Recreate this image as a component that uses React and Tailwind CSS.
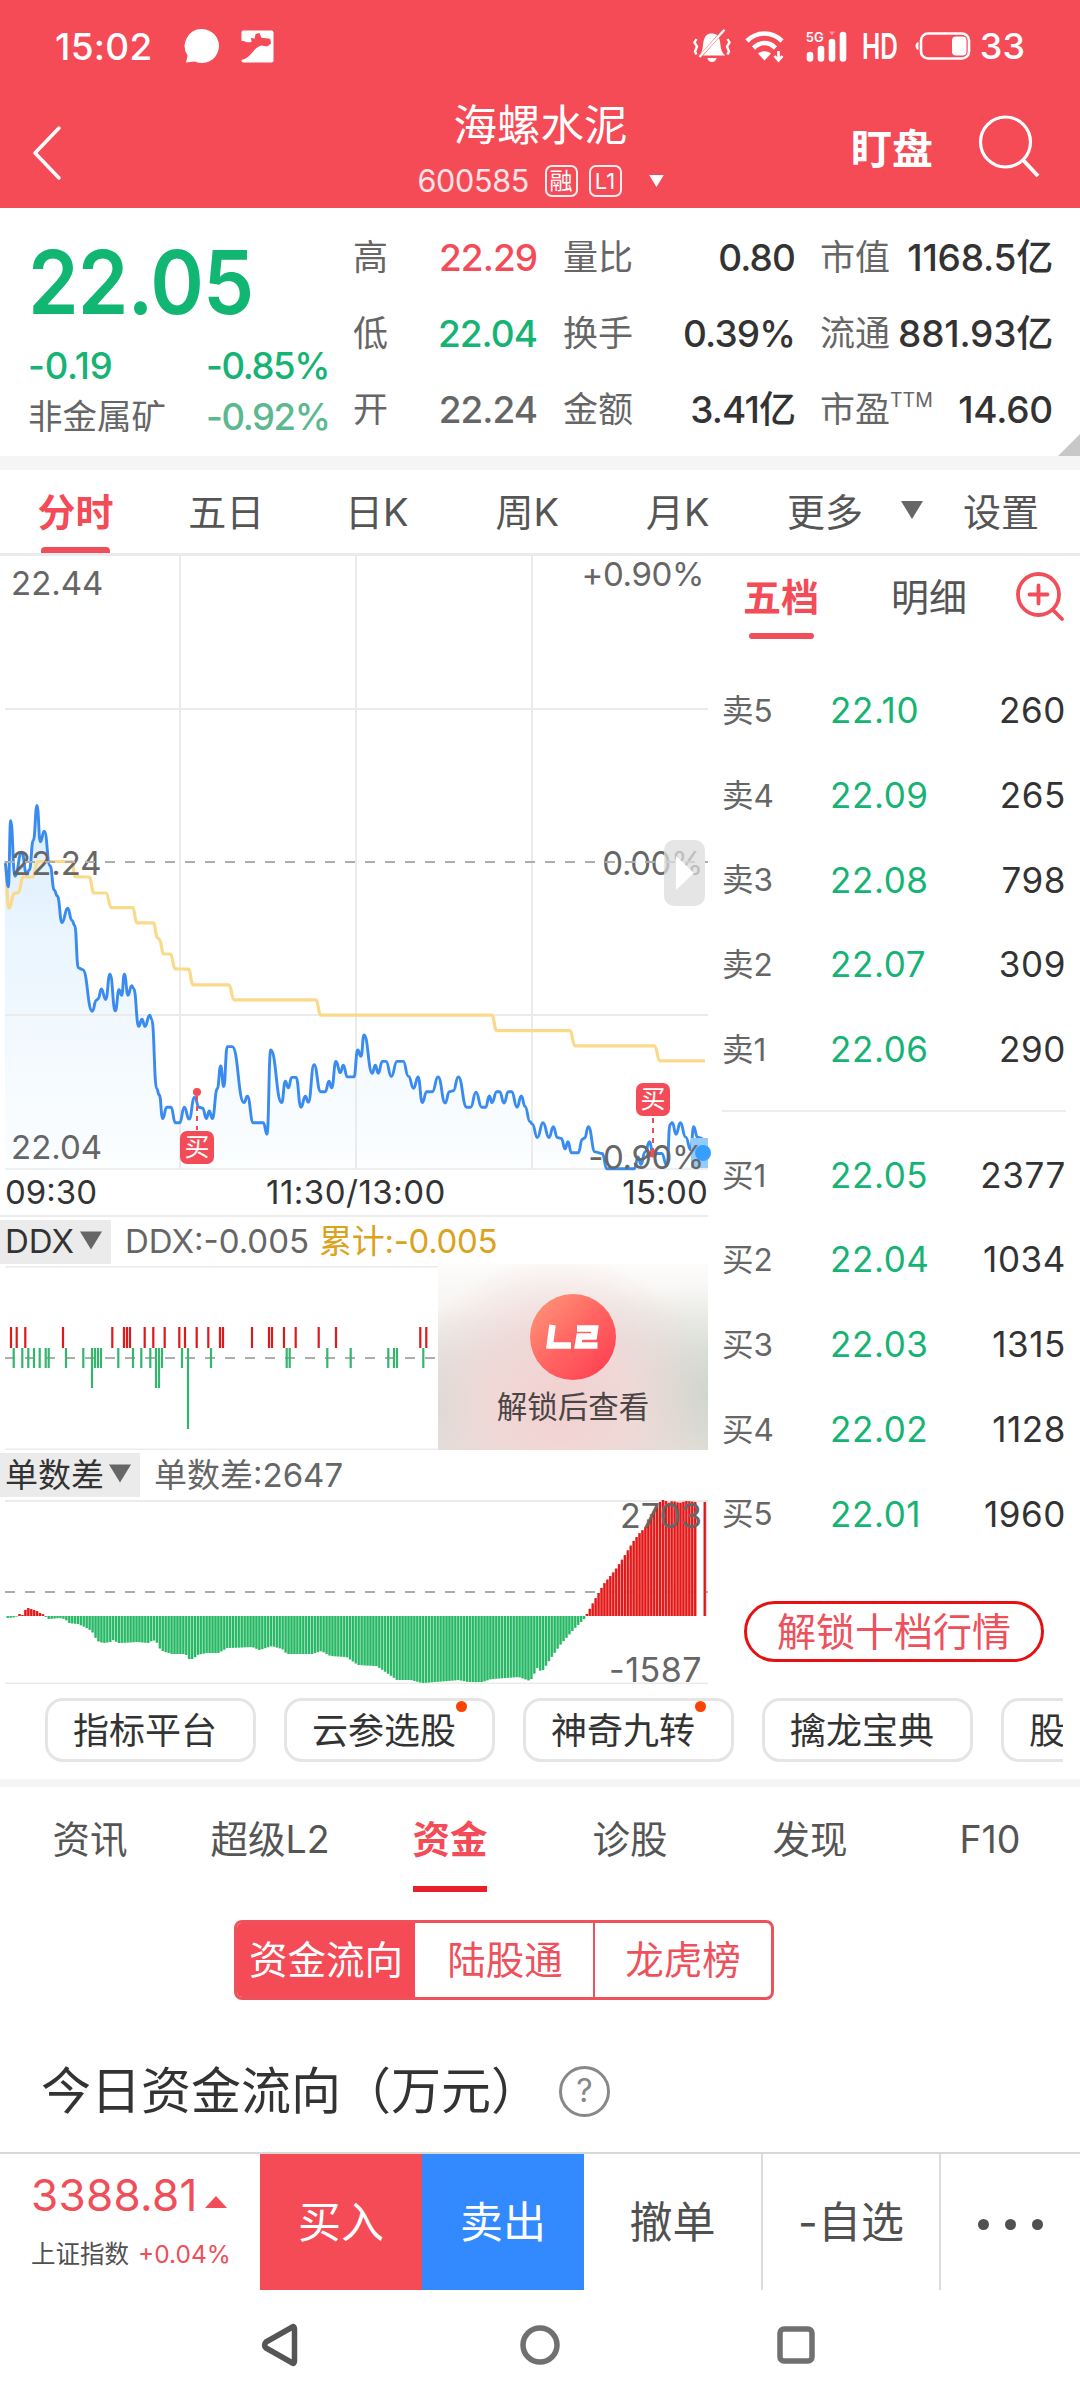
import React from "react";
import clsx from "clsx";

const stats = [
  { label: "高", value: "22.29", color: "text-[#f34b57]" },
  { label: "低", value: "22.04", color: "text-[#15b374]" },
  { label: "开", value: "22.24", color: "text-[#666666]" },
];

const volumes = [
  { label: "量比", value: "0.80" },
  { label: "换手", value: "0.39%" },
  { label: "金额", value: "3.41亿" },
];

const caps = [
  { label: "市值", value: "1168.5亿" },
  { label: "流通", value: "881.93亿" },
  { label: "市盈", sup: "TTM", value: "14.60" },
];

const asks = [
  ["卖5", "22.10", "260"],
  ["卖4", "22.09", "265"],
  ["卖3", "22.08", "798"],
  ["卖2", "22.07", "309"],
  ["卖1", "22.06", "290"],
];

const bids = [
  ["买1", "22.05", "2377"],
  ["买2", "22.04", "1034"],
  ["买3", "22.03", "1315"],
  ["买4", "22.02", "1128"],
  ["买5", "22.01", "1960"],
];

const tools = [
  { name: "指标平台" },
  { name: "云参选股", dot: true },
  { name: "神奇九转", dot: true },
  { name: "擒龙宝典" },
  { name: "股东研究" },
];

const infoTabs = ["资讯", "超级L2", "资金", "诊股", "发现", "F10"];

// plot units: x is a third of a pixel, y is scaled by PLOT_Y
const PLOT_Y = 0.42088;

const pricePoints = [
  [14, 742], [25, 800], [32, 643], [45, 775], [65, 718], [80, 770], [88, 760], [100, 690], [111, 607],
  [121, 693], [133, 668], [150, 750], [163, 808], [172, 822], [186, 885], [203, 851], [216, 880],
  [224, 892], [235, 993], [248, 997], [277, 1096], [289, 1070], [295, 1066], [304, 1043], [317, 1068],
  [330, 1008], [346, 1095], [357, 1045], [365, 1058], [373, 1008], [384, 1058], [395, 1035], [401, 1042],
  [416, 1132], [426, 1115], [435, 1132], [449, 1105], [455, 1115], [470, 1280], [478, 1295], [488, 1351],
  [500, 1324], [513, 1324], [526, 1361], [539, 1361], [553, 1324], [567, 1352], [584, 1300], [597, 1324],
  [608, 1326], [619, 1351], [628, 1333], [637, 1351], [652, 1280], [662, 1226], [671, 1275], [682, 1180],
  [697, 1180], [732, 1313], [742, 1298], [760, 1361], [790, 1361], [801, 1388], [812, 1188], [845, 1313],
  [856, 1262], [865, 1278], [875, 1253], [888, 1253], [903, 1324], [916, 1298], [925, 1312], [942, 1223],
  [962, 1287], [976, 1287], [987, 1262], [995, 1278], [1008, 1215], [1021, 1242], [1030, 1224],
  [1042, 1252], [1062, 1252], [1073, 1188], [1083, 1203], [1092, 1152], [1117, 1243], [1126, 1224],
  [1135, 1243], [1147, 1215], [1158, 1215], [1174, 1251], [1191, 1215], [1210, 1215], [1225, 1250],
  [1241, 1279], [1254, 1252], [1267, 1313], [1280, 1287], [1297, 1287], [1314, 1252], [1336, 1314],
  [1348, 1287], [1360, 1285], [1375, 1252], [1400, 1324], [1412, 1324], [1428, 1288], [1445, 1324],
  [1457, 1324], [1468, 1297], [1476, 1313], [1490, 1287], [1499, 1287], [1512, 1314], [1525, 1287],
  [1535, 1287], [1551, 1324], [1564, 1297], [1575, 1322], [1590, 1358], [1597, 1364], [1612, 1396],
  [1629, 1361], [1647, 1396], [1660, 1370], [1672, 1396], [1684, 1398], [1695, 1423], [1704, 1406],
  [1714, 1432], [1735, 1432], [1747, 1400], [1754, 1397], [1765, 1370], [1785, 1430], [1807, 1434],
  [1820, 1470], [1903, 1470], [1914, 1442], [1923, 1460], [1935, 1430], [1949, 1406], [1958, 1434],
  [1985, 1434], [2001, 1463], [2010, 1365], [2017, 1361], [2028, 1388], [2041, 1361], [2057, 1395],
  [2072, 1425], [2081, 1370], [2092, 1395], [2105, 1398], [2118, 1434],
];

const averagePoints = [
  [14, 742], [27, 851], [43, 816], [54, 814], [70, 777], [97, 777], [115, 740], [215, 740], [226, 776],
  [267, 777], [282, 815], [318, 815], [334, 850], [398, 850], [411, 886], [460, 886], [473, 922],
  [478, 925], [491, 960], [511, 960], [526, 995], [565, 996], [580, 1033], [687, 1033], [702, 1069],
  [948, 1069], [962, 1105], [1475, 1105], [1490, 1142], [1710, 1142], [1725, 1178], [1963, 1178],
  [1980, 1214], [2115, 1214],
];

const toPixel = ([x, y]) => [x / 3, y * PLOT_Y - 6];

const smoothPath = (points) => {
  const px = points.map(toPixel);
  return px
    .map(([x, y], i) => {
      if (i === 0) return `M${x.toFixed(1)} ${y.toFixed(1)}`;
      const [x0, y0] = px[i - 1];
      const mid = ((x0 + x) / 2).toFixed(1);
      return `C${mid} ${y0.toFixed(1)} ${mid} ${y.toFixed(1)} ${x.toFixed(1)} ${y.toFixed(1)}`;
    })
    .join("");
};

const pricePath = smoothPath(pricePoints);
const averagePath = smoothPath(averagePoints);

const ddxRed = [
  33, 50, 76, 189, 337, 372, 381, 390, 434, 460, 494, 538, 555, 590, 625, 660, 669, 756, 807, 816, 852,
  887, 956, 1008, 1261, 1279,
];
const ddxGreen = [
  41, 67, 85, 102, 119, 137, 146, 198, 250, 285, 294, 303, 355, 399, 424, 451, 486, 546, 633, 860, 869,
  982, 1052, 1165, 1182, 1191, 1270,
];
const ddxDeep = [[276, 40], [468, 40], [477, 40], [564, 81]];

const orderEnvelope = [
  [17, -2], [35, -1], [42, 2], [49, 1], [55, 6], [61, 8], [67, 7], [74, 6], [80, 5], [87, 3], [93, 2],
  [100, -1], [106, -3], [130, -2], [142, -3], [150, -7], [170, -8], [185, -11], [200, -15], [212, -25],
  [225, -27], [240, -26], [246, -24], [258, -27], [300, -26], [325, -27], [332, -24], [340, -25],
  [350, -34], [360, -36], [375, -38], [405, -38], [408, -43], [422, -43], [428, -39], [450, -37],
  [475, -37], [495, -32], [550, -31], [565, -34], [592, -30], [615, -33], [625, -38], [680, -38],
  [700, -35], [720, -40], [755, -41], [780, -49], [820, -50], [840, -56], [865, -64], [895, -64],
  [920, -67], [1000, -64], [1020, -66], [1050, -66], [1070, -63], [1130, -61], [1155, -65], [1170, -52],
  [1180, -56], [1200, -42], [1220, -29], [1235, -21], [1250, -13], [1272, -3], [1282, 5], [1300, 20],
  [1315, 32], [1340, 46], [1360, 60], [1380, 75], [1395, 84], [1405, 88], [1415, 100], [1430, 108],
  [1440, 116], [1448, 116], [1455, 113], [1465, 115], [1480, 113], [1495, 115], [1515, 114],
];

const orderBars = [];
for (let x = 17; x <= 1520; x += 6.37) {
  const next = orderEnvelope.findIndex(([ex]) => ex > x);
  const i = next < 0 ? orderEnvelope.length - 1 : next;
  const [x0, h0] = orderEnvelope[i - 1];
  const [x1, h1] = orderEnvelope[i];
  orderBars.push({ x: x / 2.178, h: h0 + ((h1 - h0) * Math.min(x - x0, x1 - x0)) / (x1 - x0) });
}
orderBars.push({ x: 704.8, h: 114 });

const DownTriangle = ({ className }) => (
  <svg viewBox="0 0 22 18" className={className}>
    <path d="M0 0h22L11 18z" fill="currentColor" />
  </svg>
);

const StatusBar = () => (
  <div className="flex h-[92px] items-center pl-[55px] pr-[55px] text-white">
    <span className="text-[37px] font-medium leading-none tracking-[0.3px]">15:02</span>
    <svg viewBox="0 0 36 36" className="ml-[31px] h-[36px] w-[36px]">
      <path d="M18 1a17 17 0 1 1-7 32.5L2 34.500l1.600-7A17 17 0 0 1 18 1z" fill="white" />
    </svg>
    <svg viewBox="0 0 34 34" className="ml-[21px] h-[33px] w-[33px]">
      <rect x="0.500" y="0.500" width="33" height="33" rx="2" fill="white" />
      <path d="M0 11c4 0 7 3 11 1l-1-4 4 1 1-5 4-1 2 5 9 1 1 5-4 3-6-1c-10 3-9 12-21 15z" fill="#f54b57" />
    </svg>

    <div className="ml-auto flex items-center">
      <svg viewBox="0 0 38 34" className="h-[34px] w-[38px]" fill="none" stroke="white" strokeWidth="2.400">
        <path d="M6 26.500c4-3.500 3.500-8 4.500-14C12 6 15 4.500 19 4.500s7 2 8 8c1 7 1 11 5.500 14z" fill="white" stroke="none" />
        <path d="M14.500 29h9a4.500 4 0 0 1-9 0z" fill="white" stroke="none" />
        <path d="M5 30L31 1" stroke="#f54b57" strokeWidth="3" />
        <path d="M6.500 28L31.500 0.800" />
        <path d="M3.500 10l-2 3.500 2.500 4-2 5 1.500 3M34.500 10l2 3.500-2.500 4 2 5-1.500 3" />
      </svg>
      <svg viewBox="0 0 40 34" className="ml-[14px] h-[34px] w-[40px]" fill="none" stroke="white" strokeWidth="4.600">
        <path d="M2 12c10-10 25-10 35 0" />
        <path d="M8.500 19c7-6.500 15-6.500 22 0" />
        <path d="M13 24.500c4-3 9-3 13 0l-6.500 7z" fill="white" stroke="none" />
        <path d="M33.500 22v9m-4-4l4 4.500 4-4.500" strokeWidth="2.600" />
      </svg>
      <div className="relative ml-[21px] h-[34px] w-[42px]">
        <span className="absolute left-0 top-[2px] text-[13px] font-semibold leading-none">5G</span>
        <svg viewBox="0 0 42 34" className="h-[34px] w-[42px]" stroke="white" strokeWidth="6.600" strokeLinecap="round">
          <path d="M4 26v3.500M15 20v9.500M26 13v16.500M37 6v23.500" />
          <path d="M23 2.500h6l-3 4z" fill="#ff9aa2" stroke="none" />
        </svg>
      </div>
      <span className="ml-[14px] w-[36px] origin-left scale-x-[0.68] text-[36px] font-semibold leading-none">HD</span>
      <svg viewBox="0 0 56 30" className="ml-[17px] h-[30px] w-[56px]">
        <rect x="6" y="2.500" width="48" height="25" rx="7" fill="none" stroke="white" strokeWidth="2.600" />
        <rect x="37" y="5.500" width="14.500" height="19" rx="4" fill="white" />
        <path d="M3.500 11v8c-4-1-4-7 0-8z" fill="white" />
      </svg>
      <span className="ml-[9px] text-[36px] font-medium leading-none">33</span>
    </div>
  </div>
);

const Header = () => (
  <header className="h-[208px] bg-[#f54b57] text-white">
    <StatusBar />
    <div className="flex h-[116px] items-start justify-between pl-[30px] pr-[40px]">
      <svg viewBox="0 0 34 56" className="mt-[33px] h-[56px] w-[34px]" fill="none" stroke="white" strokeWidth="3.500">
        <path d="M29 3L5 28l24 25" strokeLinecap="round" strokeLinejoin="round" />
      </svg>
      <div className="ml-[166px] flex w-[330px] flex-col items-center">
        <h1 className="mt-[10px] h-[46px] text-[43.500px] leading-[46px]">海螺水泥</h1>
        <div className="mt-[16px] flex h-[34px] w-[330px] items-center pl-[42px]">
          <span className="w-[111px] text-[30.500px] leading-none tracking-[-0.3px] text-white/85">600585</span>
          <span className="ml-[16px] flex h-[32px] w-[33px] shrink-0 items-center justify-center rounded-[7px] border-2 border-white/90 text-[23px] leading-none">
            融
          </span>
          <span className="ml-[11px] flex h-[32px] w-[33px] shrink-0 items-center justify-center rounded-[7px] border-2 border-white/90 text-[22px] leading-none">
            L1
          </span>
          <DownTriangle className="ml-[25px] h-[12px] w-[19px] shrink-0" />
        </div>
      </div>
      <div className="flex items-center">
        <span className="mt-[27px] text-[41px] font-bold leading-[46px]">盯盘</span>
        <svg viewBox="0 0 64 64" className="ml-[43px] mt-[22px] h-[64px] w-[64px]" fill="none" stroke="white" strokeWidth="3.200">
          <circle cx="29.500" cy="28" r="25" />
          <path d="M47 46l15 16" strokeWidth="4" />
        </svg>
      </div>
    </div>
  </header>
);

const QuotePanel = () => (
  <section className="relative flex h-[248px] bg-white pl-[28px]">
    <div className="w-[325px]">
      <div className="mt-[30px] h-[88px] origin-left scale-x-[0.925] text-[88px] font-semibold leading-[88px] tracking-[-1px] text-[#12b673]">22.05</div>
      <div className="mt-[21px] flex h-[38px] items-center text-[36.500px] font-medium leading-none text-[#15b374]">
        <span className="w-[178px] tracking-[-0.2px]">-0.19</span>
        <span className="tracking-[-1.4px]">-0.85%</span>
      </div>
      <div className="mt-[13px] flex h-[38px] items-center text-[36.500px] leading-none">
        <span className="w-[178px] text-[34.500px] text-[#666666]">非金属矿</span>
        <span className="font-medium tracking-[-1.4px] text-[#5cb88f]">-0.92%</span>
      </div>
    </div>
    <div className="flex w-[184px] flex-col pt-[11px]">
      {stats.map((s) => (
        <div key={s.label} className="flex h-[76px] items-center justify-between leading-none">
          <span className="text-[35px] text-[#666666]">{s.label}</span>
          <span className={clsx("text-[37px] font-medium tracking-[-1px]", s.color)}>{s.value}</span>
        </div>
      ))}
    </div>
    <div className="ml-[26px] flex w-[232px] flex-col pt-[11px]">
      {volumes.map((s) => (
        <div key={s.label} className="flex h-[76px] items-center justify-between leading-none">
          <span className="text-[35px] text-[#666666]">{s.label}</span>
          <span className="text-[37px] font-medium tracking-[-0.9px] text-[#333333]">{s.value}</span>
        </div>
      ))}
    </div>
    <div className="ml-[25px] flex w-[233px] flex-col pt-[11px]">
      {caps.map((s) => (
        <div key={s.label} className="flex h-[76px] items-center justify-between whitespace-nowrap leading-none">
          <span className="flex text-[35px] text-[#666666]">
            {s.label}
            {s.sup && <span className="mt-[-1px] text-[19.500px] leading-none">{s.sup}</span>}
          </span>
          <span className="text-[37px] font-medium tracking-[-0.2px] text-[#333333]">{s.value}</span>
        </div>
      ))}
    </div>
    <svg viewBox="0 0 22 22" className="absolute bottom-0 right-0 h-[22px] w-[22px]">
      <path d="M22 0v22H0z" fill="#c8c8c8" />
    </svg>
  </section>
);

const PeriodTabs = () => (
  <nav className="flex h-[86px] items-center border-b-[3px] border-[#ebebeb] bg-white text-[38px] leading-none text-[#555555]">
    <div className="relative flex h-full w-[151px] items-center justify-center font-bold text-[#f34b57]">
      分时
      <span className="absolute bottom-0 left-[41px] h-[6px] w-[69px] rounded-t-[4px] bg-[#f04e59]" />
    </div>
    {["五日", "日K", "周K", "月K"].map((t) => (
      <div key={t} className="w-[150.500px] text-center">{t}</div>
    ))}
    <div className="ml-[34px]">更多</div>
    <DownTriangle className="ml-[38px] mt-[-3px] h-[18px] w-[22px] text-[#666666]" />
    <div className="ml-[40px]">设置</div>
  </nav>
);

const BuyMark = ({ className }) => (
  <span className={clsx("absolute flex h-[33px] w-[34px] items-center justify-center rounded-[7px] bg-[#f34b57] text-[25px] leading-none text-white", className)}>
    买
  </span>
);

const PriceChart = () => (
  <div className="relative h-[613px] w-[708px] text-[33px] leading-[34px] text-[#666666]">
    <svg viewBox="0 0 708 618" className="h-[618px] w-[708px] overflow-visible">
      <defs>
        <linearGradient id="priceFill" x1="0" y1="0" x2="0" y2="1">
          <stop offset="0" stopColor="#d9edfd" />
          <stop offset="0.35" stopColor="#eaf5fe" />
          <stop offset="1" stopColor="#fcfeff" />
        </linearGradient>
      </defs>
      <path d={`${pricePath}L706 613L5 613z`} fill="url(#priceFill)" />
      <path d="M5 153H708M5 459H708M180 0V613M356 0V613M532 0V613" stroke="#ebebeb" strokeWidth="2" />
      <path d="M5 613H708" stroke="#e8eaec" strokeWidth="1.500" />
      <path d={averagePath} fill="none" stroke="#fbd98b" strokeWidth="3.200" />
      <path d={pricePath} fill="none" stroke="#3a8bf0" strokeWidth="2.900" />
      <rect x="691" y="582" width="17" height="30" fill="#94cbfb" />
      <circle cx="703" cy="597" r="8" fill="#35a0ff" />
      <path d="M197 540V574M653 562V597" stroke="#f34b57" strokeWidth="2" strokeDasharray="5 5" />
      <circle cx="197" cy="536" r="4" fill="#f34b57" />
      <circle cx="653" cy="597.500" r="4" fill="#f34b57" />
    </svg>
    <span className="absolute left-[11px] top-[10px]">22.44</span>
    <span className="absolute left-[11px] top-[290px]">22.24</span>
    <span className="absolute left-[11px] top-[574px]">22.04</span>
    <span className="absolute right-[4px] top-[1px] tracking-[-0.4px]">+0.90%</span>
    <span className="absolute right-[5px] top-[290px] tracking-[-0.4px]">0.00%</span>
    <span className="absolute right-[4px] top-[584px] tracking-[-0.4px]">-0.90%</span>
    <svg viewBox="0 0 708 4" className="absolute left-0 top-[304px] h-[4px] w-[708px]">
      <path d="M5 2H708" stroke="#adadad" strokeWidth="2.200" strokeDasharray="10 10" />
    </svg>
    <div className="absolute left-[664px] top-[284px] flex h-[66px] w-[41px] items-center justify-center rounded-[10px] bg-[#dcdcdc]/75">
      <svg viewBox="0 0 18 34" className="h-[34px] w-[18px]">
        <path d="M0 0l18 17L0 34z" fill="white" />
      </svg>
    </div>
    <BuyMark className="left-[180px] top-[575px]" />
    <BuyMark className="left-[636px] top-[527px]" />
  </div>
);

const DdxChart = () => (
  <div className="relative h-[184px] w-[708px]">
    <svg viewBox="0 1266 708 184" className="h-[184px] w-[708px]">
      <path d="M5 1266.500H708M5 1449.500H708" stroke="#ebebeb" strokeWidth="2" />
      <path d="M5 1358H435" stroke="#adadad" strokeWidth="2.200" strokeDasharray="10 10" />
      <path d={ddxRed.map((x) => `M${(x / 3).toFixed(1)} 1327V1348`).join("")} stroke="#dd1b1b" strokeWidth="2.200" />
      <path d={ddxGreen.map((x) => `M${(x / 3).toFixed(1)} 1348V1368`).join("")} stroke="#35b56e" strokeWidth="2.200" />
      <path d={ddxDeep.map(([x, h]) => `M${(x / 3).toFixed(1)} 1348v${h}`).join("")} stroke="#35b56e" strokeWidth="2.200" />
    </svg>
    <div className="absolute bottom-0 right-0 flex h-[186px] w-[270px] flex-col items-center bg-[radial-gradient(ellipse_at_45%_75%,#f2d0d0_0%,#efd9d7_35%,transparent_75%),radial-gradient(ellipse_at_100%_70%,#cbd6cc_0%,transparent_60%),radial-gradient(ellipse_at_0%_78%,#d3dad4_0%,transparent_50%),linear-gradient(180deg,#fdfcfb_0%,#f3efec_40%,#e3dfda_70%,#eee3e0_100%)]">
      <div className="mt-[30px] flex h-[86px] w-[86px] items-center justify-center rounded-full bg-linear-to-br from-[#ff9a7c] via-[#ff6461] to-[#ff3350]">
        <svg viewBox="0 0 54 26" className="h-[26px] w-[54px]" fill="none" stroke="white" strokeWidth="6.500">
          <path d="M6.500 1L3.800 21.500H25" />
          <path d="M31 4.500H49L47.800 12.500H33.500L32 21.500H51.500" />
        </svg>
      </div>
      <span className="mt-[9px] text-[30.500px] leading-[36px] text-[#4a4545]">解锁后查看</span>
    </div>
  </div>
);

const OrderCountChart = () => (
  <div className="relative h-[184px] w-[708px] text-[34px] leading-[40px] text-[#666666]">
    <svg viewBox="0 1500 708 184" className="h-[184px] w-[708px]">
      <path d="M5 1501H708M5 1683.500H708" stroke="#ebebeb" strokeWidth="2" />
      <path d="M5 1592H708" stroke="#adadad" strokeWidth="2.200" strokeDasharray="10 10" />
      {orderBars.map((b, i) => (
        <g key={i} fill={b.h > 0 ? "#e01818" : "#2cb566"}>
          <rect
            x={b.x - 1.4}
            y={b.h > 0 ? 1616 - b.h : 1616}
            width="2.93"
            height={Math.abs(b.h)}
            fill={b.h > 0 ? "#f87878" : "#84e3ac"}
          />
          <rect x={b.x - 1} y={b.h > 0 ? 1616 - b.h : 1616} width="2" height={Math.abs(b.h)} />
        </g>
      ))}
    </svg>
    <span className="absolute right-[6px] top-[-4px]">2703</span>
    <span className="absolute right-[6px] top-[150px] tracking-[0.5px]">-1587</span>
  </div>
);

const BookRow = ({ row }) => (
  <div className="flex h-[84.7px] items-center leading-none">
    <span className="w-[108px] text-[31.500px] text-[#666666]">{row[0]}</span>
    <span className="text-[35px] tracking-[0.6px] text-[#15b374]">{row[1]}</span>
    <span className="ml-auto text-[35px] tracking-[0.6px] text-[#333333]">{row[2]}</span>
  </div>
);

const OrderBook = () => (
  <aside className="flex w-[372px] flex-col pl-[14px] pr-[14px]">
    <div className="flex h-[83px] items-start pl-[21px] text-[38px] leading-[44px]">
      <div className="relative mt-[19px] font-bold text-[#f34b57]">
        五档
        <span className="absolute left-[6px] top-[58px] h-[6px] w-[65px] rounded-full bg-[#f04e59]" />
      </div>
      <div className="ml-[72px] mt-[19px] text-[#555555]">明细</div>
      <svg viewBox="0 0 50 50" className="ml-[48px] mt-[15px] h-[50px] w-[50px] shrink-0" fill="none" stroke="#f04e59" strokeWidth="3.800">
        <circle cx="23.500" cy="23.500" r="20.500" />
        <path d="M14.500 23.500h18M23.500 14.500v18M37.500 38.500l9.500 9.500" strokeLinecap="round" />
      </svg>
    </div>
    <div className="mt-[29.500px]">
      {asks.map((row) => <BookRow key={row[0]} row={row} />)}
    </div>
    <div className="mt-[18px] h-[2px] bg-[#ededed]" />
    <div className="mt-[21px]">
      {bids.map((row) => <BookRow key={row[0]} row={row} />)}
    </div>
    <button className="ml-[22px] mt-[45px] flex h-[61px] w-[300px] items-center justify-center rounded-full border-[3px] border-[#e60f12] text-[39px] leading-none text-[#ee515c]">
      解锁十档行情
    </button>
  </aside>
);

const MarketBody = () => (
  <section className="flex h-[1128px] bg-white">
    <div className="w-[708px]">
      <PriceChart />
      <div className="relative flex h-[48px] items-center justify-between border-b-2 border-[#ececec] pl-[5px] text-[33px] leading-none text-[#333333]">
        <span>09:30</span>
        <span className="absolute left-[266px] tracking-[0.5px]">11:30/13:00</span>
        <span className="tracking-[0.2px]">15:00</span>
      </div>
      <div className="flex h-[49px] items-center text-[33px] leading-none">
        <div className="flex h-[44px] w-[111px] shrink-0 items-center bg-[#ebebeb] pl-[5px] text-[#333333]">
          DDX
          <DownTriangle className="ml-[6px] mt-[-3px] h-[19px] w-[22px] text-[#666666]" />
        </div>
        <span className="ml-[14px] text-[#666666]">DDX:-0.005</span>
        <span className="ml-[10px] tracking-[-0.3px] text-[#dba21e]">累计:-0.005</span>
      </div>
      <DdxChart />
      <div className="flex h-[50px] items-center text-[33px] leading-none">
        <div className="flex h-[44px] w-[140px] shrink-0 items-center bg-[#ebebeb] pl-[5px] text-[#333333]">
          单数差
          <DownTriangle className="ml-[5px] mt-[-3px] h-[19px] w-[22px] text-[#666666]" />
        </div>
        <span className="ml-[14px] text-[#666666]">单数差:2647</span>
      </div>
      <OrderCountChart />
    </div>
    <OrderBook />
  </section>
);

const ToolPills = () => (
  <div className="h-[95px] bg-white pl-[45px] pr-[17px] pt-[14px]">
    <div className="flex h-[64px] gap-[28px] overflow-hidden">
      {tools.map((t) => (
        <div key={t.name} className="relative flex h-[64px] w-[211px] shrink-0 items-center whitespace-nowrap rounded-[18px] border-[3px] border-[#e5e5e5] pl-[25px] pt-[1px] text-[36px] leading-none text-[#333333]">
          {t.name}
          {t.dot && <span className="absolute right-[25px] top-0 h-[11px] w-[11px] rounded-full bg-[#fb4304]" />}
        </div>
      ))}
    </div>
  </div>
);

const InfoTabs = () => (
  <nav className="grid h-[105px] grid-cols-6 bg-white text-[37.500px] leading-none text-[#555555]">
    {infoTabs.map((t) => {
      const active = t === "资金";
      return (
        <div key={t} className={clsx("relative flex items-center justify-center pt-[1px]", active && "font-bold text-[#f34b57]")}>
          {t}
          {active && <span className="absolute bottom-0 left-[53px] h-[6px] w-[74px] bg-[#e81f29]" />}
        </div>
      );
    })}
  </nav>
);

const FundFlow = () => (
  <section className="h-[260px] bg-white pt-[28px]">
    <div className="ml-[234px] flex h-[80px] w-[540px] overflow-hidden rounded-[8px] border-[3px] border-[#ee515c] text-[38.500px] leading-none text-[#ee515c]">
      <div className="flex w-[178px] items-center justify-center whitespace-nowrap bg-[#f54b57] text-white">资金流向</div>
      <div className="flex w-[180px] items-center justify-center border-r-2 border-[#ee515c] pl-[2px]">陆股通</div>
      <div className="flex flex-1 items-center justify-center">龙虎榜</div>
    </div>
    <div className="mt-[65px] flex h-[52px] items-center pl-[41px]">
      <h2 className="text-[50px] leading-none text-[#333333]">今日资金流向（万元）</h2>
      <span className="ml-[18px] flex h-[51px] w-[51px] items-center justify-center rounded-full border-[3px] border-[#888888] text-[32px] leading-none text-[#888888]">
        ?
      </span>
    </div>
  </section>
);

const TradeBar = () => (
  <footer className="flex h-[138px] border-t-2 border-[#d8d8d8] bg-white text-[43px] leading-none text-[#505050]">
    <div className="w-[260px] pl-[31px]">
      <div className="mt-[19px] flex h-[44px] items-center text-[#f04e59]">
        <span className="text-[44px] tracking-[0.3px]">3388.81</span>
        <svg viewBox="0 0 22 12" className="ml-[7px] mt-[14px] h-[12px] w-[22px]">
          <path d="M11 0l11 12H0z" fill="#f04e59" />
        </svg>
      </div>
      <div className="mt-[23px] flex h-[28px] items-center whitespace-nowrap text-[24.500px]">
        <span>上证指数</span>
        <span className="ml-[9px] text-[#f04e59]">+0.04%</span>
      </div>
    </div>
    <button className="w-[162px] bg-[#f54b57] text-white">买入</button>
    <button className="w-[162px] bg-[#338aff] text-white">卖出</button>
    <button className="w-[179px] border-r-2 border-[#dcdcdc]">撤单</button>
    <button className="w-[178px] border-r-2 border-[#dcdcdc]">-自选</button>
    <div className="flex flex-1 items-center justify-center gap-[16px] pt-[4px]">
      {[0, 1, 2].map((i) => (
        <span key={i} className="h-[11px] w-[11px] rounded-full bg-[#505050]" />
      ))}
    </div>
  </footer>
);

const SystemNav = () => (
  <div className="flex h-[109px] items-center bg-white pl-[261px]">
    <svg viewBox="0 0 556 46" className="h-[46px] w-[556px]" fill="none" strokeWidth="5.500" strokeLinejoin="round">
      <path d="M31.500 5c1-1 2 0 2 2v32c0 2-1 3-2 2L5 26c-2-2-2-4 0-6z" stroke="#555555" />
      <circle cx="279" cy="23" r="17" stroke="#707070" />
      <rect x="519" y="7" width="32" height="32" rx="4" stroke="#707070" />
    </svg>
  </div>
);

const App = () => {
  return (
    <div className="h-[2400px] w-[1080px] overflow-hidden bg-white font-['Inter','Noto_Sans_CJK_SC',sans-serif]">
      <Header />
      <QuotePanel />
      <div className="h-[14px] bg-[#f5f5f5]" />
      <PeriodTabs />
      <MarketBody />
      <ToolPills />
      <div className="h-[8px] bg-[#f5f5f5]" />
      <InfoTabs />
      <FundFlow />
      <TradeBar />
      <SystemNav />
    </div>
  );
};

export default App;
